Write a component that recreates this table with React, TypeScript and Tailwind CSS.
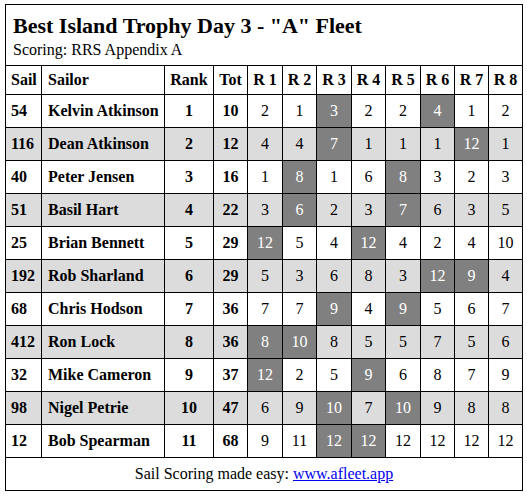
import React from 'react';

type Row = { sail: number; name: string; rank: number; tot: number; races: (number | string)[] };

// races: a string value marks a discarded (dark) score
const rows: Row[] = [
  { sail: 54, name: 'Kelvin Atkinson', rank: 1, tot: 10, races: [2, 1, '3', 2, 2, '4', 1, 2] },
  { sail: 116, name: 'Dean Atkinson', rank: 2, tot: 12, races: [4, 4, '7', 1, 1, 1, '12', 1] },
  { sail: 40, name: 'Peter Jensen', rank: 3, tot: 16, races: [1, '8', 1, 6, '8', 3, 2, 3] },
  { sail: 51, name: 'Basil Hart', rank: 4, tot: 22, races: [3, '6', 2, 3, '7', 6, 3, 5] },
  { sail: 25, name: 'Brian Bennett', rank: 5, tot: 29, races: ['12', 5, 4, '12', 4, 2, 4, 10] },
  { sail: 192, name: 'Rob Sharland', rank: 6, tot: 29, races: [5, 3, 6, 8, 3, '12', '9', 4] },
  { sail: 68, name: 'Chris Hodson', rank: 7, tot: 36, races: [7, 7, '9', 4, '9', 5, 6, 7] },
  { sail: 412, name: 'Ron Lock', rank: 8, tot: 36, races: ['8', '10', 8, 5, 5, 7, 5, 6] },
  { sail: 32, name: 'Mike Cameron', rank: 9, tot: 37, races: ['12', 2, 5, '9', 6, 8, 7, 9] },
  { sail: 98, name: 'Nigel Petrie', rank: 10, tot: 47, races: [6, 9, '10', 7, '10', 9, 8, 8] },
  { sail: 12, name: 'Bob Spearman', rank: 11, tot: 68, races: [9, 11, '12', '12', 12, 12, 12, 12] },
];

const widths = [36, 123, 49, 34, 35, 34, 35, 34, 35, 34, 34, 34];

export default function App() {
  return (
    <div className="bg-white w-[527px] h-[497px] pt-[4px] pl-[5px] font-['Liberation_Serif',serif]">
      <table className="border-collapse table-fixed w-[518px] text-[16px] text-black font-['Liberation_Serif',serif]">
        <colgroup>
          {widths.map((w, i) => (
            <col key={i} style={{ width: w }} />
          ))}
        </colgroup>
        <tbody>
          <tr className="h-[61px]">
            <td colSpan={12} className="border border-black px-[7px] pt-[8px] pb-[4px] align-top">
              <div className="text-[22px] font-bold leading-[26px]">Best Island Trophy Day 3 - "A" Fleet</div>
              <div className="text-[16px] leading-[20px] mt-[1px]">Scoring: RRS Appendix A</div>
            </td>
          </tr>
          <tr className="h-[29px] font-bold">
            <td className="border border-black px-[5px] text-left">Sail</td>
            <td className="border border-black px-[6px] text-left">Sailor</td>
            <td className="border border-black text-center">Rank</td>
            <td className="border border-black text-center">Tot</td>
            {[1, 2, 3, 4, 5, 6, 7, 8].map(n => (
              <td key={n} className="border border-black text-center whitespace-nowrap">R {n}</td>
            ))}
          </tr>
          {rows.map((r, i) => (
            <tr key={r.sail} className={`h-[33px] ${i % 2 === 1 ? 'bg-[#dcdcdc]' : 'bg-white'}`}>
              <td className="border border-black px-[5px] font-bold">{r.sail}</td>
              <td className="border border-black px-[6px] font-bold whitespace-nowrap">{r.name}</td>
              <td className="border border-black text-center font-bold">{r.rank}</td>
              <td className="border border-black text-center font-bold">{r.tot}</td>
              {r.races.map((v, j) => (
                <td
                  key={j}
                  className={`border border-black text-center ${typeof v === 'string' ? 'bg-[#808080] text-white' : ''}`}
                >
                  {v}
                </td>
              ))}
            </tr>
          ))}
          <tr className="h-[33px]">
            <td colSpan={12} className="border border-black text-center">
              Sail Scoring made easy: <a href="#" className="text-[#0000ee] underline">www.afleet.app</a>
            </td>
          </tr>
        </tbody>
      </table>
    </div>
  );
}
